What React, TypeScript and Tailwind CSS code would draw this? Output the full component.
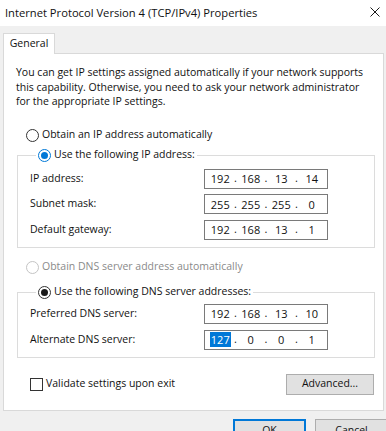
import React from "react"

const font = { fontFamily: '"Open Sans", "Noto Sans", Arial, sans-serif' }

function Radio({ state }: { state: "off" | "blue" | "black" | "disabled" }) {
  const ring =
    state === "blue"
      ? "border-[#0078d7]"
      : state === "disabled"
      ? "border-[#c4c4c4]"
      : "border-[#333333]"
  return (
    <span
      className={`w-[13px] h-[13px] rounded-full border bg-white flex items-center justify-center shrink-0 ${ring}`}
    >
      {state === "blue" && <span className="w-[7px] h-[7px] rounded-full bg-[#0078d7]" />}
      {state === "black" && <span className="w-[7px] h-[7px] rounded-full bg-[#1a1a1a]" />}
    </span>
  )
}

function IpBox({ parts, selectFirst }: { parts: string[]; selectFirst?: boolean }) {
  return (
    <div className="w-[124px] h-[20px] border border-[#7a7a7a] bg-white flex items-center text-[11px]">
      {parts.map((p, i) => (
        <React.Fragment key={i}>
          {i > 0 && <span className="w-0 flex justify-center">.</span>}
          <span className="flex-1 flex justify-center">
            <span
              className={
                i === 0 && selectFirst
                  ? "bg-[#0078d7] text-white px-[1px] leading-[15px]"
                  : "leading-[15px]"
              }
            >
              {p}
            </span>
          </span>
        </React.Fragment>
      ))}
    </div>
  )
}

function FieldRow({ label, parts, selectFirst }: { label: string; parts: string[]; selectFirst?: boolean }) {
  return (
    <div className="flex items-center h-[20px]">
      <span className="w-[174px]">{label}</span>
      <IpBox parts={parts} selectFirst={selectFirst} />
    </div>
  )
}

function Button({ children, focused }: { children: React.ReactNode; focused?: boolean }) {
  return (
    <div
      className={`w-[73px] h-[23px] bg-[#e1e1e1] flex items-center justify-center shrink-0 ${
        focused ? "border-2 border-[#0078d7]" : "border border-[#adadad]"
      }`}
    >
      {children}
    </div>
  )
}

export default function App() {
  return (
    <div
      className="w-[386px] h-[431px] bg-[#f0f0f0] overflow-hidden text-[10.5px] text-[#111]"
      style={font}
    >
      {/* Title bar */}
      <div className="h-[26px] bg-white flex items-center justify-between pl-[5px] pr-[3px]">
        <span className="text-[11.2px] leading-[16px]">
          Internet Protocol Version 4 (TCP/IPv4) Properties
        </span>
        <svg width="10" height="10" viewBox="0 0 10 10" className="mr-[3px] mb-[2px]">
          <path d="M0.5 0.5 L9.5 9.5 M9.5 0.5 L0.5 9.5" stroke="#1a1a1a" strokeWidth="1" />
        </svg>
      </div>

      {/* Tab strip */}
      <div className="pt-[7px] pl-[3px] flex">
        <div className="w-[52px] h-[21px] bg-white border border-b-0 border-[#d9d9d9] -mb-px relative flex items-center justify-center pb-[1px]">
          General
        </div>
      </div>

      {/* Panel */}
      <div className="ml-[3px] w-[381px] h-[358px] bg-white border border-[#d9d9d9] pt-[11px]">
        <p className="pl-[12px] pr-[8px] leading-[14.5px]">
          You can get IP settings assigned automatically if your network supports this
          capability. Otherwise, you need to ask your network administrator for the
          appropriate IP settings.
        </p>

        <div className="mt-[19px] pl-[22px] flex items-center gap-[3px] h-[15px]">
          <Radio state="off" />
          <span>Obtain an IP address automatically</span>
        </div>

        <fieldset className="mt-[5px] ml-[13px] mr-[8px] border border-[#dcdcdc] pl-[12px] pt-[6px] pb-[7px]">
          <legend className="ml-[6px] px-[2px] flex items-center gap-[3px] h-[15px]">
            <Radio state="blue" />
            <span>Use the following IP address:</span>
          </legend>
          <div className="flex flex-col gap-[5.5px]">
            <FieldRow label="IP address:" parts={["192", "168", "13", "14"]} />
            <FieldRow label="Subnet mask:" parts={["255", "255", "255", "0"]} />
            <FieldRow label="Default gateway:" parts={["192", "168", "13", "1"]} />
          </div>
        </fieldset>

        <div className="mt-[12px] pl-[22px] flex items-center gap-[3px] h-[15px] text-[#8a8a8a]">
          <Radio state="disabled" />
          <span>Obtain DNS server address automatically</span>
        </div>

        <fieldset className="mt-[10px] ml-[13px] mr-[8px] border border-[#dcdcdc] pl-[12px] pt-[4px] pb-[7px]">
          <legend className="ml-[6px] px-[2px] flex items-center gap-[3px] h-[15px]">
            <Radio state="black" />
            <span>Use the following DNS server addresses:</span>
          </legend>
          <div className="flex flex-col gap-[6px]">
            <FieldRow label="Preferred DNS server:" parts={["192", "168", "13", "10"]} />
            <FieldRow label="Alternate DNS server:" parts={["127", "0", "0", "1"]} selectFirst />
          </div>
        </fieldset>

        <div className="mt-[16px] flex items-center justify-between pl-[26px] pr-[9px]">
          <div className="flex items-center gap-[3px]">
            <span className="w-[13px] h-[13px] border border-[#333333] bg-white" />
            <span>Validate settings upon exit</span>
          </div>
          <div className="w-[88px] h-[21px] bg-[#e1e1e1] border border-[#adadad] flex items-center justify-center">
            Advanced...
          </div>
        </div>
      </div>

      {/* Dialog buttons */}
      <div className="mt-[8px] pl-[233px] flex gap-[9px]">
        <Button focused>OK</Button>
        <Button>Cancel</Button>
      </div>
    </div>
  )
}
